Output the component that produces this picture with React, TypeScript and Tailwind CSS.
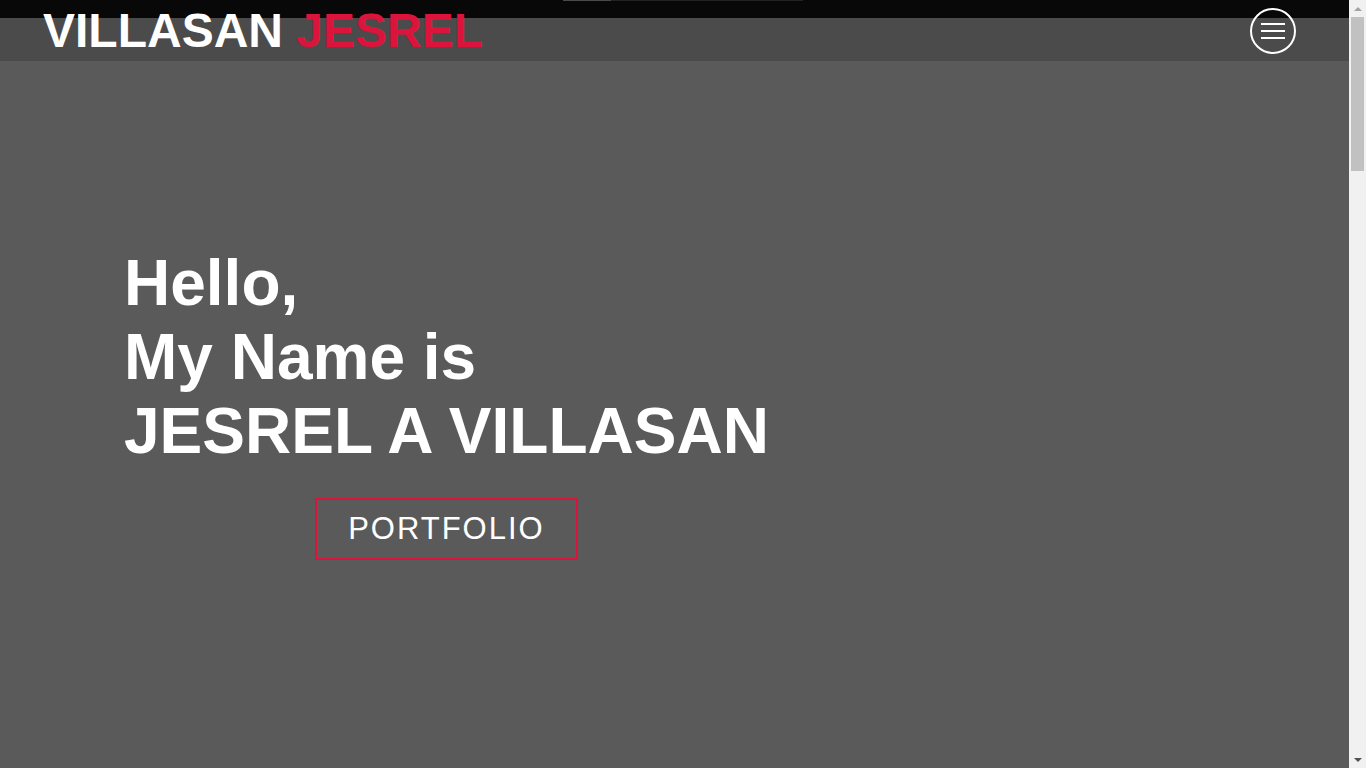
export default function App() {
    return (
        <div className="flex h-screen bg-[#5a5a5a] font-['Liberation_Sans',Arial,sans-serif] text-white">
            <div className="min-w-0 flex-1">
                {/* top bar + header */}
                <header className="relative flex h-[61px] items-start justify-between bg-[linear-gradient(#080808_18px,#4b4b4b_18px)] pl-[43px] pr-[53px]">
                    <div className="absolute left-[563px] top-0 flex h-px w-[240px]">
                        <div className="w-[48px] bg-[#4a4a4a]"></div>
                        <div className="flex-1 bg-[#222222]"></div>
                    </div>
                    <a href="#" className="relative mt-[3px] text-[48px] font-bold leading-[normal]">
                        VILLASAN <span className="text-[#dc143c]">JESREL</span>
                    </a>
                    <button className="mt-[8px] flex h-[46px] w-[46px] flex-col items-center justify-center gap-[5px] rounded-full border-2 border-white">
                        <span className="h-[2px] w-[24px] bg-white"></span>
                        <span className="h-[2px] w-[24px] bg-white"></span>
                        <span className="h-[2px] w-[24px] bg-white"></span>
                    </button>
                </header>

                {/* hero */}
                <section className="pl-[124px] pt-[185px]">
                    <div className="inline-flex flex-col items-center">
                        <h1 className="text-[64px] font-bold leading-[normal]">
                            Hello,
                            <br />
                            My Name is
                            <br />
                            JESREL A VILLASAN
                        </h1>
                        <a
                            href="#"
                            className="mt-[30px] border-2 border-[#dc143c] px-[31px] py-[11px] text-[31px] leading-[normal] tracking-[2px] text-white"
                        >
                            PORTFOLIO
                        </a>
                    </div>
                </section>
            </div>

            {/* scrollbar */}
            <div className="flex w-[17px] flex-col items-center bg-[#f1f1f1]">
                <div className="flex h-[17px] w-full items-center justify-center">
                    <span className="h-0 w-0 border-x-[4px] border-b-[4px] border-x-transparent border-b-[#a3a3a3]"></span>
                </div>
                <div className="h-[154px] w-[13px] bg-[#c1c1c1]"></div>
                <div className="flex-1"></div>
                <div className="flex h-[17px] w-full items-center justify-center">
                    <span className="h-0 w-0 border-x-[4px] border-t-[4px] border-x-transparent border-t-[#505050]"></span>
                </div>
            </div>
        </div>
    )
}
